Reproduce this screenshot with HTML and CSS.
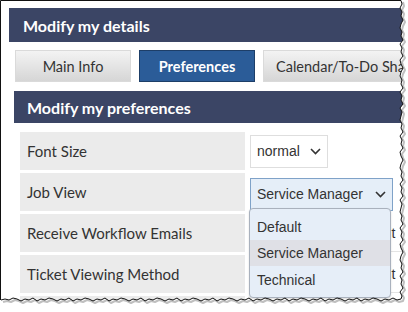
FILE: index.html
```html
<!DOCTYPE html>
<html>
<head>
<meta charset="utf-8">
<link rel="stylesheet" href="styles.css">
</head>
<body>
<div class="shot">
  <div class="paper">
    <div class="bar bar-top">Modify my details</div>
    <div class="tabs">
      <div class="tab">Main Info</div>
      <div class="tab tab-active">Preferences</div>
      <div class="tab tab-wide">Calendar/To-Do Sharing</div>
    </div>
    <div class="bar bar-sub">Modify my preferences</div>
    <div class="rows">
      <div class="label">Font Size</div>
      <div class="value"><div class="select select-small"><span>normal</span><svg class="chev" width="11" height="7" viewBox="0 0 11 7"><path d="M1 1l4.5 4.5L10 1" fill="none" stroke="#333" stroke-width="1.6"/></svg></div></div>
      <div class="label">Job View</div>
      <div class="value"><div class="select select-open"><span>Service Manager</span><svg class="chev" width="11" height="7" viewBox="0 0 11 7"><path d="M1 1l4.5 4.5L10 1" fill="none" stroke="#333" stroke-width="1.6"/></svg></div></div>
      <div class="label">Receive Workflow Emails</div>
      <div class="value value-text">Default</div>
      <div class="label">Ticket Viewing Method</div>
      <div class="value value-text">Default</div>
      <div class="label"></div>
      <div class="value"></div>
    </div>
  </div>
  <div class="dropdown">
    <div class="opt">Default</div>
    <div class="opt opt-hi">Service Manager</div>
    <div class="opt">Technical</div>
  </div>
  <svg class="tear" width="408" height="312" viewBox="0 0 408 312">
    <path fill="#fff" d="M408 0 L401 0 L402 4 L400 8 L402 12 L401 16 L403 20 L401 24 L400 28 L402 32 L401 36 L403 40 L400 44 L402 48 L401 52 L403 56 L400 60 L401 64 L403 68 L401 72 L400 76 L402 80 L401 84 L403 88 L400 92 L402 96 L401 100 L403 104 L400 108 L402 112 L401 116 L400 120 L402 124 L401 128 L403 132 L400 136 L402 140 L401 144 L403 148 L400 152 L401 156 L403 160 L401 164 L400 168 L402 172 L401 176 L403 180 L400 184 L402 188 L401 192 L403 196 L400 200 L402 204 L401 208 L400 212 L402 216 L401 220 L403 224 L400 228 L402 232 L401 236 L403 240 L400 244 L401 248 L403 252 L401 256 L400 260 L402 264 L401 268 L403 272 L400 276 L402 280 L401 284 L403 288 L400 292 L402 296 L401 299 L397 300 L393 298 L389 300 L385 299 L381 301 L377 299 L373 298 L369 300 L365 299 L361 301 L357 298 L353 300 L349 299 L345 301 L341 299 L337 298 L333 300 L329 299 L325 301 L321 298 L317 300 L313 299 L309 301 L305 299 L301 298 L297 300 L293 299 L289 301 L285 298 L281 300 L277 299 L273 301 L269 299 L265 298 L261 300 L257 299 L253 301 L249 298 L245 300 L241 299 L237 301 L233 299 L229 298 L225 300 L221 299 L217 301 L213 298 L209 300 L205 299 L201 301 L197 299 L193 298 L189 300 L185 299 L181 301 L177 298 L173 300 L169 299 L165 301 L161 299 L157 298 L153 300 L149 299 L145 301 L141 298 L137 300 L133 299 L129 301 L125 299 L121 298 L117 300 L113 299 L109 301 L105 298 L101 300 L97 299 L93 301 L89 299 L85 298 L81 300 L77 299 L73 301 L69 298 L65 300 L61 299 L57 301 L53 299 L49 298 L45 300 L41 299 L37 301 L33 298 L29 300 L25 299 L21 301 L17 299 L13 298 L9 300 L5 299 L1 300 L0 300 L0 312 L408 312 Z"/>
    <g fill="none" stroke-linejoin="round">
      <path class="edge-shadow" transform="translate(2 2)" d="M401 0 L402 4 L400 8 L402 12 L401 16 L403 20 L401 24 L400 28 L402 32 L401 36 L403 40 L400 44 L402 48 L401 52 L403 56 L400 60 L401 64 L403 68 L401 72 L400 76 L402 80 L401 84 L403 88 L400 92 L402 96 L401 100 L403 104 L400 108 L402 112 L401 116 L400 120 L402 124 L401 128 L403 132 L400 136 L402 140 L401 144 L403 148 L400 152 L401 156 L403 160 L401 164 L400 168 L402 172 L401 176 L403 180 L400 184 L402 188 L401 192 L403 196 L400 200 L402 204 L401 208 L400 212 L402 216 L401 220 L403 224 L400 228 L402 232 L401 236 L403 240 L400 244 L401 248 L403 252 L401 256 L400 260 L402 264 L401 268 L403 272 L400 276 L402 280 L401 284 L403 288 L400 292 L402 296 L401 299 L397 300 L393 298 L389 300 L385 299 L381 301 L377 299 L373 298 L369 300 L365 299 L361 301 L357 298 L353 300 L349 299 L345 301 L341 299 L337 298 L333 300 L329 299 L325 301 L321 298 L317 300 L313 299 L309 301 L305 299 L301 298 L297 300 L293 299 L289 301 L285 298 L281 300 L277 299 L273 301 L269 299 L265 298 L261 300 L257 299 L253 301 L249 298 L245 300 L241 299 L237 301 L233 299 L229 298 L225 300 L221 299 L217 301 L213 298 L209 300 L205 299 L201 301 L197 299 L193 298 L189 300 L185 299 L181 301 L177 298 L173 300 L169 299 L165 301 L161 299 L157 298 L153 300 L149 299 L145 301 L141 298 L137 300 L133 299 L129 301 L125 299 L121 298 L117 300 L113 299 L109 301 L105 298 L101 300 L97 299 L93 301 L89 299 L85 298 L81 300 L77 299 L73 301 L69 298 L65 300 L61 299 L57 301 L53 299 L49 298 L45 300 L41 299 L37 301 L33 298 L29 300 L25 299 L21 301 L17 299 L13 298 L9 300 L5 299 L1 300"/>
      <path class="edge" d="M0.5 300 L0.5 0.5 L401 0.5 L402 4 L400 8 L402 12 L401 16 L403 20 L401 24 L400 28 L402 32 L401 36 L403 40 L400 44 L402 48 L401 52 L403 56 L400 60 L401 64 L403 68 L401 72 L400 76 L402 80 L401 84 L403 88 L400 92 L402 96 L401 100 L403 104 L400 108 L402 112 L401 116 L400 120 L402 124 L401 128 L403 132 L400 136 L402 140 L401 144 L403 148 L400 152 L401 156 L403 160 L401 164 L400 168 L402 172 L401 176 L403 180 L400 184 L402 188 L401 192 L403 196 L400 200 L402 204 L401 208 L400 212 L402 216 L401 220 L403 224 L400 228 L402 232 L401 236 L403 240 L400 244 L401 248 L403 252 L401 256 L400 260 L402 264 L401 268 L403 272 L400 276 L402 280 L401 284 L403 288 L400 292 L402 296 L401 299 L397 300 L393 298 L389 300 L385 299 L381 301 L377 299 L373 298 L369 300 L365 299 L361 301 L357 298 L353 300 L349 299 L345 301 L341 299 L337 298 L333 300 L329 299 L325 301 L321 298 L317 300 L313 299 L309 301 L305 299 L301 298 L297 300 L293 299 L289 301 L285 298 L281 300 L277 299 L273 301 L269 299 L265 298 L261 300 L257 299 L253 301 L249 298 L245 300 L241 299 L237 301 L233 299 L229 298 L225 300 L221 299 L217 301 L213 298 L209 300 L205 299 L201 301 L197 299 L193 298 L189 300 L185 299 L181 301 L177 298 L173 300 L169 299 L165 301 L161 299 L157 298 L153 300 L149 299 L145 301 L141 298 L137 300 L133 299 L129 301 L125 299 L121 298 L117 300 L113 299 L109 301 L105 298 L101 300 L97 299 L93 301 L89 299 L85 298 L81 300 L77 299 L73 301 L69 298 L65 300 L61 299 L57 301 L53 299 L49 298 L45 300 L41 299 L37 301 L33 298 L29 300 L25 299 L21 301 L17 299 L13 298 L9 300 L5 299 L1 300"/>
    </g>
  </svg>
</div>
</body>
</html>
```

FILE: styles.css
```css
html, body {
  margin: 0;
  padding: 0;
  background: #fff;
}
.shot {
  position: relative;
  width: 408px;
  height: 312px;
  overflow: hidden;
  font-family: Lato, "Liberation Sans", sans-serif;
}
.paper {
  width: 420px;
  padding: 8px 0 0 9px;
  box-sizing: border-box;
  display: flex;
  flex-direction: column;
}
.bar {
  background: #3b4565;
  color: #fff;
  font-weight: 700;
  font-size: 16px;
  display: flex;
  align-items: center;
}
.bar-top {
  height: 34px;
  padding-left: 14px;
}
.tabs {
  display: flex;
  gap: 8px;
  margin: 8px 0 0 6px;
  height: 32px;
}
.tab {
  width: 116px;
  box-sizing: border-box;
  flex: none;
  display: flex;
  align-items: center;
  justify-content: center;
  font-size: 14.5px;
  color: #333;
  border: 1px solid #dadada;
  background: linear-gradient(#f3f3f3, #d6d6d6);
  white-space: nowrap;
}
.tab-active {
  background: #2b5c98;
  border-color: #1d3e68;
  color: #fff;
  font-weight: 700;
}
.tab-wide {
  width: auto;
  justify-content: flex-start;
  padding: 0 13px 0 12px;
}
.bar-sub {
  margin: 9px 0 0 5px;
  height: 32px;
  padding-left: 13px;
}
.rows {
  margin: 9px 0 0 11px;
  display: grid;
  grid-template-columns: 225px 160px;
  grid-auto-rows: 38px;
  row-gap: 3px;
  column-gap: 5px;
}
.label {
  background: #ebebeb;
  color: #333;
  font-size: 15px;
  display: flex;
  align-items: center;
  padding-left: 7px;
  white-space: nowrap;
}
.value {
  display: flex;
  align-items: center;
  font-family: "Liberation Sans", Arial, sans-serif;
  font-size: 14px;
  color: #333;
  white-space: nowrap;
}
.value-text {
  padding-left: 101px;
  border-bottom: 1px solid #e4e4e4;
}
.select {
  height: 33px;
  box-sizing: border-box;
  display: flex;
  align-items: center;
  justify-content: space-between;
  padding: 0 6px 0 6px;
  border: 1px solid #dedede;
  background: #fff;
  font-family: "Liberation Sans", Arial, sans-serif;
  font-size: 14px;
  color: #333;
  white-space: nowrap;
  flex: none;
}
.select-small {
  width: 78px;
}
.select-open {
  width: 143px;
  margin-top: 4px;
  background: #e5eef8;
  border-color: #7fa2c8;
}
.chev {
  flex: none;
}
.dropdown {
  position: absolute;
  left: 249px;
  top: 208px;
  width: 142px;
  box-sizing: border-box;
  padding: 4px 0;
  background: #e6eef8;
  border: 1px solid #a9b1bd;
  border-radius: 4px;
  box-shadow: 0 1px 2px rgba(0,0,0,0.15);
  font-family: "Liberation Sans", Arial, sans-serif;
  font-size: 14px;
  color: #333;
  white-space: nowrap;
}
.opt {
  height: 27px;
  display: flex;
  align-items: center;
  padding-left: 7px;
}
.opt-hi {
  background: #dfe0e6;
  height: 26px;
}
.tear {
  position: absolute;
  left: 0;
  top: 0;
}
.edge {
  stroke: #111;
  stroke-width: 1;
}
.edge-shadow {
  stroke: rgba(0,0,0,0.25);
  stroke-width: 2;
}
```
